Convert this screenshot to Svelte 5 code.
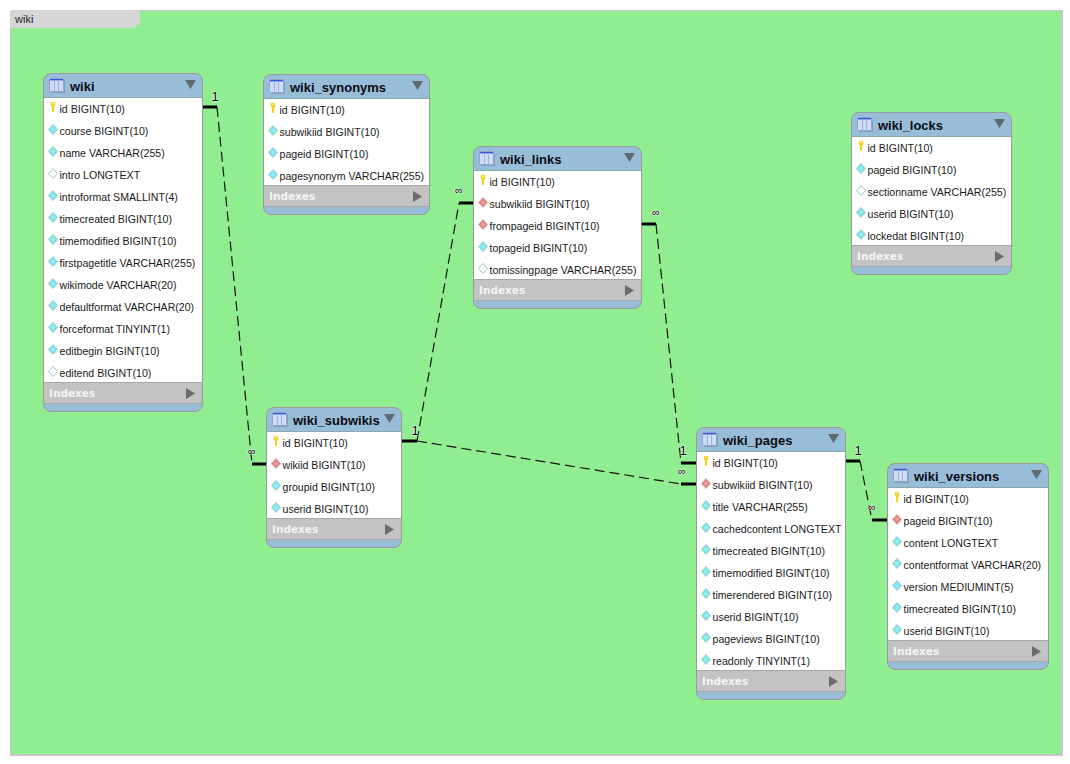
<script>
  const tables = [
    { name: 'wiki', x: 43, y: 73, w: 160, rows: [
      ['key', 'id BIGINT(10)'], ['nn', 'course BIGINT(10)'], ['nn', 'name VARCHAR(255)'], ['null', 'intro LONGTEXT'],
      ['nn', 'introformat SMALLINT(4)'], ['nn', 'timecreated BIGINT(10)'], ['nn', 'timemodified BIGINT(10)'],
      ['nn', 'firstpagetitle VARCHAR(255)'], ['nn', 'wikimode VARCHAR(20)'], ['nn', 'defaultformat VARCHAR(20)'],
      ['nn', 'forceformat TINYINT(1)'], ['nn', 'editbegin BIGINT(10)'], ['null', 'editend BIGINT(10)']
    ] },
    { name: 'wiki_synonyms', x: 263, y: 74, w: 167, rows: [
      ['key', 'id BIGINT(10)'], ['nn', 'subwikiid BIGINT(10)'], ['nn', 'pageid BIGINT(10)'], ['nn', 'pagesynonym VARCHAR(255)']
    ] },
    { name: 'wiki_links', x: 473, y: 146, w: 169, rows: [
      ['key', 'id BIGINT(10)'], ['fk', 'subwikiid BIGINT(10)'], ['fk', 'frompageid BIGINT(10)'], ['nn', 'topageid BIGINT(10)'],
      ['null', 'tomissingpage VARCHAR(255)']
    ] },
    { name: 'wiki_locks', x: 851, y: 112, w: 161, rows: [
      ['key', 'id BIGINT(10)'], ['nn', 'pageid BIGINT(10)'], ['null', 'sectionname VARCHAR(255)'], ['nn', 'userid BIGINT(10)'],
      ['nn', 'lockedat BIGINT(10)']
    ] },
    { name: 'wiki_subwikis', x: 266, y: 407, w: 136, rows: [
      ['key', 'id BIGINT(10)'], ['fk', 'wikiid BIGINT(10)'], ['nn', 'groupid BIGINT(10)'], ['nn', 'userid BIGINT(10)']
    ] },
    { name: 'wiki_pages', x: 696, y: 427, w: 150, rows: [
      ['key', 'id BIGINT(10)'], ['fk', 'subwikiid BIGINT(10)'], ['nn', 'title VARCHAR(255)'], ['nn', 'cachedcontent LONGTEXT'],
      ['nn', 'timecreated BIGINT(10)'], ['nn', 'timemodified BIGINT(10)'], ['nn', 'timerendered BIGINT(10)'],
      ['nn', 'userid BIGINT(10)'], ['nn', 'pageviews BIGINT(10)'], ['nn', 'readonly TINYINT(1)']
    ] },
    { name: 'wiki_versions', x: 887, y: 463, w: 162, rows: [
      ['key', 'id BIGINT(10)'], ['fk', 'pageid BIGINT(10)'], ['nn', 'content LONGTEXT'], ['nn', 'contentformat VARCHAR(20)'],
      ['nn', 'version MEDIUMINT(5)'], ['nn', 'timecreated BIGINT(10)'], ['nn', 'userid BIGINT(10)']
    ] }
  ];

  // connector stubs are thick, the run between them is dashed
  const stubs = [
    [203, 107, 217, 107], [252, 464, 267, 464],
    [402, 441, 417, 441], [459, 203, 474, 203],
    [642, 224, 656, 224], [681, 463, 697, 463],
    [681, 484, 697, 484], [846, 461, 860, 461], [872, 520, 888, 520]
  ];
  const dashes = [
    [217, 107, 252, 464], [417, 441, 459, 203], [656, 224, 681, 463],
    [417, 441, 681, 484], [860, 461, 872, 520]
  ];
  const labels = [
    ['1', 215, 96], ['∞', 252, 451], ['1', 415, 430], ['∞', 459, 190],
    ['∞', 656, 212], ['1', 683, 450], ['∞', 682, 471], ['1', 858, 450], ['∞', 872, 507]
  ];
</script>

<div class="page">
  <div class="canvas">
    <div class="tab">wiki</div>

    <svg class="lines" width="1070" height="764" viewBox="0 0 1070 764">
      {#each dashes as [x1, y1, x2, y2]}
        <line {x1} {y1} {x2} {y2} stroke="#111" stroke-width="1.2" stroke-dasharray="10 5" />
      {/each}
      {#each stubs as [x1, y1, x2, y2]}
        <line {x1} {y1} {x2} {y2} stroke="#000" stroke-width="3" />
      {/each}
    </svg>

    {#each labels as [text, x, y]}
      <span class="label" class:inf={text === '∞'} style="left: {x}px; top: {y}px">{text}</span>
    {/each}

    {#each tables as t}
      <div class="table" style="left: {t.x}px; top: {t.y}px; width: {t.w}px">
        <div class="head">
          <svg class="grid" width="16" height="15" viewBox="0 0 16 15">
            <rect x="0.5" y="0.5" width="14" height="13" rx="1" fill="#cfdcf4" stroke="#8fa3d4" />
            <rect x="1" y="1" width="13" height="1.4" fill="#2f55d4" />
            <path d="M5.5 2.5v11M9.5 2.5v11" stroke="#9fb2dc" />
            <path d="M15.5 2v12.5H2" stroke="#6f8aa3" fill="none" opacity="0.6" />
          </svg>
          <span class="title">{t.name}</span>
          <svg class="arrow" width="11" height="9" viewBox="0 0 11 9"><path d="M0 0h11L5.5 9z" fill="#5f6a70" /></svg>
        </div>
        <div class="rows">
          {#each t.rows as [kind, text]}
            <div class="row">
              {#if kind === 'key'}
                <svg class="icon" width="10" height="14" viewBox="0 0 10 14">
                  <path d="M2.8 1.5Q5 0 7.2 1.5 8 4 6.2 6L6 10.5 5 11.5 4 10.5V6Q2 4 2.8 1.5z" fill="#f6d322" />
                  <path d="M4 2.5h2" stroke="#fff6b0" />
                </svg>
              {:else}
                <svg class="icon" width="10" height="14" viewBox="0 0 10 14">
                  <path d="M5 1.5 9.6 6.5 5 11.5 0.4 6.5z" class={kind} />
                  {#if kind !== 'null'}
                    <path d="M5 4 7.5 6.5 5 9 2.5 6.5z" fill="#fff" opacity="0.25" />
                  {/if}
                </svg>
              {/if}
              <span>{text}</span>
            </div>
          {/each}
        </div>
        <div class="indexes">
          <span>Indexes</span>
          <svg width="9" height="11" viewBox="0 0 9 11"><path d="M0 0l9 5.5-9 5.5z" fill="#6b6b6b" /></svg>
        </div>
        <div class="foot"></div>
      </div>
    {/each}
  </div>
</div>

<style>
  :global(body) {
    margin: 0;
    background: #fff;
  }

  .page {
    width: 1070px;
    height: 764px;
    position: relative;
    overflow: hidden;
    font-family: "DejaVu Sans", sans-serif;
  }

  .canvas {
    position: absolute;
    inset: 0;
  }

  .canvas::before {
    content: '';
    position: absolute;
    left: 10px;
    top: 10px;
    width: 1050px;
    height: 743px;
    background: #90ee90;
    border: 1px solid #c8c8c8;
    border-right-width: 2px;
    border-bottom-width: 2px;
  }

  .tab {
    position: absolute;
    left: 10px;
    top: 10px;
    width: 125px;
    height: 18px;
    padding-left: 5px;
    background: #d6d6d6;
    font: 11px/18px "Liberation Sans", sans-serif;
    color: #222;
    clip-path: polygon(0 0, 100% 0, 100% 75%, 95% 100%, 0 100%);
  }

  .lines {
    position: absolute;
    left: 0;
    top: 0;
  }

  .label {
    position: absolute;
    transform: translate(-50%, -50%);
    font: 13px/13px "Liberation Sans", sans-serif;
    color: #000;
    text-shadow: 0 0 2px #fff, 0 0 2px #fff, 0 0 1px #fff;
  }

  .label.inf {
    font-size: 11px;
  }

  .table {
    position: absolute;
    box-sizing: border-box;
    border: 1px solid #9a9a9a;
    border-radius: 8px;
    background: #98bdd8;
    overflow: hidden;
  }

  .head {
    height: 23px;
    display: flex;
    align-items: center;
    padding: 0 6px 0 5px;
    border-bottom: 1px solid #8aa;
  }

  .grid {
    flex: none;
    margin-right: 5px;
  }

  .title {
    flex: 1;
    padding-top: 1px;
    font: bold 13px "Liberation Sans", sans-serif;
    color: #0b0b12;
    white-space: nowrap;
  }

  .arrow {
    flex: none;
    margin-bottom: 3px;
  }

  .rows {
    background: #fff;
    margin-bottom: -2px;
  }

  .row {
    height: 22px;
    padding-left: 4px;
    display: flex;
    align-items: center;
    gap: 1.5px;
    font: 10.6px "Liberation Sans", sans-serif;
    color: #1a1a1a;
    white-space: nowrap;
    overflow: hidden;
  }

  .icon {
    flex: none;
    margin-bottom: 3px;
  }

  .nn {
    fill: #76e6e8;
    stroke: #a8c8d0;
  }

  .fk {
    fill: #e07f7a;
    stroke: #d0b0b0;
  }

  .null {
    fill: #fff;
    stroke: #8fc8cc;
  }

  .indexes {
    position: relative;
    height: 20px;
    display: flex;
    align-items: center;
    justify-content: space-between;
    padding: 0 7px 0 5px;
    background: #c3c3c3;
    border-top: 1px solid #a8a8a8;
    border-bottom: 1px solid #a8a8a8;
    font: bold 10.5px "DejaVu Sans", sans-serif;
    color: #f4f4f4;
  }

  .foot {
    height: 7px;
  }
</style>
